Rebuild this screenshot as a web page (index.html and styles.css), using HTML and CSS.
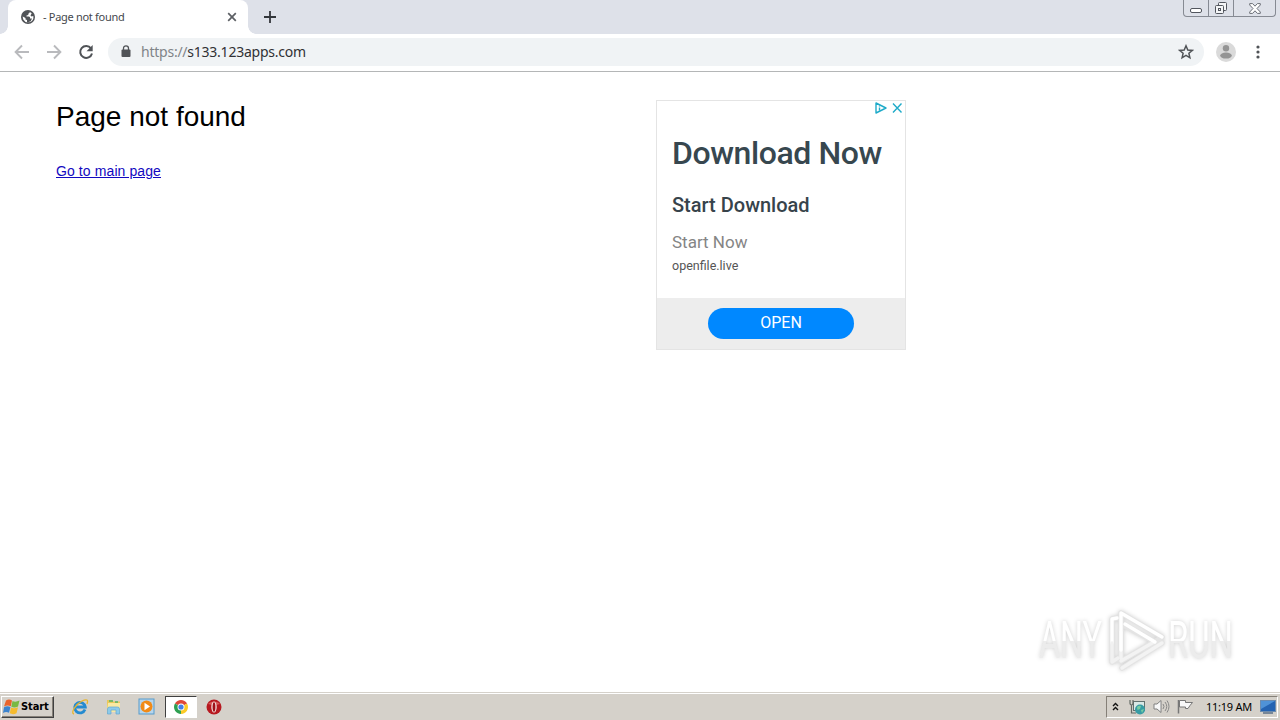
FILE: index.html
```
<!DOCTYPE html>
<html lang="en">
<head>
    <meta charset="UTF-8">
    <title>- Page not found</title>
    <link rel="stylesheet" href="styles.css">
</head>
<body>
    <div class="tab-strip">
        <div class="tab">
            <svg class="tab-icon" width="14" height="14" viewBox="0 0 14 14">
                <circle cx="7" cy="7" r="7" fill="#505357"/>
                <path d="M8.500 1.800Q9.500 3 7.500 3.500L7.200 5 5.500 5.500V6.500H8Q9.500 7 9 8.500H11Q10.500 11.500 7.500 12.300L6 12.200V10L4.500 9.500V8L1.700 6.500Q1.800 8 2.300 9.500 4 12.500 7 12.500 11.500 12 12.400 8.200L12.300 6 10.500 6.500 9.500 5.500 10.700 3.200Z" fill="#fff"/>
            </svg>
            <span class="tab-title">- Page not found</span>
            <svg class="tab-close" width="10" height="10" viewBox="0 0 10 10">
                <path d="M1.200 1.200L8.800 8.800M8.800 1.200L1.200 8.800" stroke="#5c5f64" stroke-width="1.700"/>
            </svg>
        </div>
        <svg class="new-tab" width="12" height="12" viewBox="0 0 12 12">
            <path d="M6 0V12M0 6H12" stroke="#33363b" stroke-width="1.800"/>
        </svg>
        <div class="window-buttons">
            <div class="win-btn min">
                <svg width="12" height="5" viewBox="0 0 12 5"><rect x=".5" y=".5" width="11" height="4" rx="1.500" fill="#fff" stroke="#52565e"/></svg>
            </div>
            <div class="win-btn restore">
                <svg width="14" height="14" viewBox="0 0 14 14" fill="#f4f5f7" stroke="#52565e">
                    <rect x="4.500" y=".5" width="8" height="8" rx="1"/>
                    <rect x="1.500" y="3.500" width="8" height="8" rx="1"/>
                    <rect x="4.500" y="6.500" width="2" height="2"/>
                </svg>
            </div>
            <div class="win-btn close">
                <svg width="12" height="11" viewBox="0 0 12 11"><path d="M.7.6H3.600L6 3.200 8.400.6H11.300V2L8 5.500 11.300 9V10.400H8.400L6 7.800 3.600 10.400H.7V9L4 5.500.7 2Z" fill="#fff" stroke="#6b6f77"/></svg>
            </div>
        </div>
    </div>

    <div class="toolbar">
        <svg class="nav-icon" width="16" height="16" viewBox="0 0 16 16"><path d="M15 8H2M8 1.500L1.600 8 8 14.500" fill="none" stroke="#b9babd" stroke-width="1.900"/></svg>
        <svg class="nav-icon" width="16" height="16" viewBox="0 0 16 16"><path d="M1 8H14M8 1.500L14.400 8 8 14.500" fill="none" stroke="#b9babd" stroke-width="1.900"/></svg>
        <svg class="nav-icon" width="16" height="16" viewBox="0 0 16 16">
            <path d="M13 4.300A6 6 0 1 0 14 9.500" fill="none" stroke="#505357" stroke-width="2"/>
            <path d="M14.700 1V7.200H8.500Z" fill="#505357"/>
        </svg>
        <div class="address-bar">
            <svg width="10" height="13" viewBox="0 0 10 13">
                <rect x=".5" y="4.500" width="9" height="7.500" rx="1" fill="#505357"/>
                <path d="M2.500 5V3.300a2.500 2.500 0 0 1 5 0V5" fill="none" stroke="#505357" stroke-width="1.300"/>
            </svg>
            <span class="url"><span class="scheme">https://</span>s133.123apps.com</span>
            <svg class="star" width="16" height="16" viewBox="0 0 16 16"><path d="M8 1.800L9.800 6 14.300 6.400 10.900 9.300 11.900 13.800 8 11.400 4.100 13.800 5.100 9.300 1.700 6.400 6.200 6Z" fill="none" stroke="#505357" stroke-width="1.500"/></svg>
        </div>
        <svg class="avatar" width="20" height="20" viewBox="0 0 20 20">
            <circle cx="10" cy="10" r="10" fill="#dadada"/>
            <circle cx="10" cy="6.300" r="3.200" fill="#949494"/>
            <ellipse cx="10" cy="13.600" rx="5.800" ry="3" fill="#949494"/>
        </svg>
        <svg class="menu" width="4" height="14" viewBox="0 0 4 14" fill="#505357">
            <circle cx="2" cy="2" r="1.600"/><circle cx="2" cy="7" r="1.600"/><circle cx="2" cy="12" r="1.600"/>
        </svg>
    </div>

    <div class="page">
        <div class="content">
            <h1>Page not found</h1>
            <a href="#">Go to main page</a>
        </div>
        <div class="ad">
            <svg class="ad-choices" width="29" height="14" viewBox="0 0 29 14" fill="none" stroke="#1fabc9" stroke-width="1.400">
                <path d="M2 2V12L12 7Z" stroke-linejoin="round"/>
                <path d="M5.500 6.500V9.500M5.500 4.500V5.500"/>
                <path d="M19 2.500L27.500 11.500M27.500 2.500L19 11.500"/>
            </svg>
            <div class="ad-body">
                <div class="ad-title">Download Now</div>
                <div class="ad-subtitle">Start Download</div>
                <div class="ad-text">Start Now</div>
                <div class="ad-domain">openfile.live</div>
            </div>
            <div class="ad-footer">
                <div class="ad-button">OPEN</div>
            </div>
        </div>
    </div>

    <svg class="watermark" width="230" height="76" viewBox="0 0 230 76">
        <defs>
            <linearGradient id="shine" gradientUnits="userSpaceOnUse" x1="0" y1="0" x2="0" y2="68">
                <stop offset=".52" stop-color="#fff"/>
                <stop offset=".52" stop-color="#ececec"/>
            </linearGradient>
        </defs>
        <g class="mark-text" fill="url(#shine)">
            <text x="4" y="52" textLength="63" lengthAdjust="spacingAndGlyphs">ANY</text>
            <text x="133" y="52" textLength="65" lengthAdjust="spacingAndGlyphs">RUN</text>
        </g>
        <g transform="translate(1 1)" fill="none" stroke-linejoin="round" stroke-linecap="round">
            <g stroke="#e4e4e4" stroke-width="5.500">
                <path d="M85 43V6L126 30 119 35 89 19"/>
                <path d="M81 11L76 12V55L85 51V25"/>
                <path d="M86 61L126 36M85 54L118 35"/>
            </g>
            <g stroke="#f3f3f3" stroke-width="3.400">
                <path d="M85 51V25M86 61L126 36M85 54L118 35"/>
            </g>
            <g stroke="#fff" stroke-width="3.400">
                <path d="M85 43V6L126 30M89 17L119 35"/>
                <path d="M81 11L76 12V36"/>
            </g>
            <path d="M76 36V55L82 51" stroke="#f1f1f1" stroke-width="3.400"/>
        </g>
    </svg>

    <div class="taskbar">
        <div class="start">
            <svg width="17" height="16" viewBox="0 0 17 16">
                <path d="M3 1.500Q6-.5 9 1.500L7.800 7.300Q4.500 5.800 1 7.500Z" fill="#e9632b"/>
                <path d="M9.500 2Q12.500 3.500 16.500 1.500L15 7.500Q11.500 9.200 8.300 7.700Z" fill="#79b943"/>
                <path d="M1 8.200Q4.300 6.500 7.500 8L6 13.800Q3 12.300 0 14Z" fill="#3b83ce"/>
                <path d="M8 8.500Q11 10 15 8.300L13.500 14.200Q10 16 6.800 14.300Z" fill="#f5bb2e"/>
            </svg>
            <span>Start</span>
        </div>
        <div class="quick-launch">
            <div class="task">
                <svg width="18" height="18" viewBox="0 0 18 18">
                    <path d="M14 11.500A5.300 5.300 0 1 1 14.300 9H5" fill="none" stroke="#258bd0" stroke-width="2.800"/>
                    <path d="M3 16C-1 15 5 6 11 3 16 .5 17.500 2 16 6" fill="none" stroke="#e9b52c" stroke-width="1.300"/>
                </svg>
            </div>
            <div class="task">
                <svg width="17" height="17" viewBox="0 0 17 17">
                    <path d="M2 2H7L8 3.500H15V14H2Z" fill="#e9c85b"/>
                    <path d="M3 5H15V14H2Z" fill="#f9e9a2"/>
                    <path d="M4 3H8M10 4H13" stroke="#54b36a" stroke-width="1.500"/>
                    <path d="M2.500 16V11Q2.500 9 4.500 9H12.500Q14.500 9 14.500 11V16H11V12H6V16Z" fill="#8ccaea" stroke="#62a8d1" stroke-width=".7"/>
                </svg>
            </div>
            <div class="task">
                <svg width="17" height="17" viewBox="0 0 17 17">
                    <rect x="1" y="1" width="15" height="15" fill="#b6d5ec" stroke="#579bcb"/>
                    <circle cx="8.500" cy="8.500" r="6" fill="#f18a16"/>
                    <path d="M6.500 4.800L12 8.500 6.500 12.200Z" fill="#fff"/>
                </svg>
            </div>
            <div class="task active">
                <svg width="14" height="14" viewBox="0 0 14 14">
                    <path d="M7 7L.94 3.500A7 7 0 0 1 13.060 3.500Z" fill="#df4738"/>
                    <path d="M7 7L13.060 3.500A7 7 0 0 1 7 14Z" fill="#fbca27"/>
                    <path d="M7 7L7 14A7 7 0 0 1 .94 3.500Z" fill="#2ea052"/>
                    <circle cx="7" cy="7" r="3.500" fill="#fff"/>
                    <circle cx="7" cy="7" r="2.600" fill="#437fe8"/>
                </svg>
            </div>
            <div class="task">
                <svg width="16" height="16" viewBox="0 0 16 16">
                    <circle cx="8" cy="8" r="7.500" fill="#b71920"/>
                    <path d="M2 5A7 5 0 0 1 14 5Q8 7 2 5Z" fill="#d85858"/>
                    <ellipse cx="8" cy="8" rx="2.700" ry="5.500" fill="#f5e4e1"/>
                    <ellipse cx="8" cy="8" rx="1.400" ry="4.800" fill="#9f1018"/>
                </svg>
            </div>
        </div>
        <div class="tray">
            <svg class="chevrons" width="7" height="9" viewBox="0 0 7 9"><path d="M1 4L3.500 1.500 6 4M1 8L3.500 5.500 6 8" fill="none" stroke="#111" stroke-width="1.400"/></svg>
            <svg class="network" width="17" height="16" viewBox="0 0 17 16">
                <rect x="4.500" y="2.500" width="11" height="9" fill="#d8e8e5" stroke="#62716f"/>
                <path d="M1 1V4Q1 6 2.500 6V14H7M4 1V4Q4 6 2.500 6" fill="none" stroke="#646b65" stroke-width="1.200"/>
                <circle cx="11" cy="10.500" r="5" fill="#379ca4"/>
                <path d="M8 8Q10 6 12 7L11 10 8.500 11ZM12 11L15 10 13 14Z" fill="#79cda1"/>
            </svg>
            <svg class="volume" width="17" height="15" viewBox="0 0 17 15">
                <path d="M1 5H4L8 1.500V13.500L4 10H1Z" fill="#f8f8f8" stroke="#808080"/>
                <path d="M10 5Q12 7.500 10 10M12 3Q15.500 7.500 12 12M14 1.500Q18 7.500 14 13.500" fill="none" stroke="#888"/>
            </svg>
            <svg class="flag" width="17" height="15" viewBox="0 0 17 15">
                <path d="M1.500 1V14.500" stroke="#777" stroke-width="1.500"/>
                <path d="M2.500 1.500H8.500V3.500H15.500L13 6.500 11 9.500H8.500V8H2.500Z" fill="#f8f8f8" stroke="#777"/>
            </svg>
            <span class="clock">11:19 AM</span>
            <svg class="desktop" width="16" height="14" viewBox="0 0 16 14">
                <rect x=".5" y=".5" width="15" height="11" fill="#2463b2" stroke="#6c8bae"/>
                <path d="M1 1H15L1 9Z" fill="#4f92d7"/>
                <path d="M3 13H13" stroke="#596e87" stroke-width="1.500"/>
            </svg>
        </div>
    </div>
</body>
</html>
```
FILE: styles.css
```
* {
    box-sizing: border-box;
}
body {
    margin: 0;
    height: 720px;
    overflow: hidden;
    display: flex;
    flex-direction: column;
    background: #fff;
    font-family: "Liberation Sans", Arial, sans-serif;
}
svg {
    display: block;
    flex: none;
}

/* browser */
.tab-strip {
    height: 34px;
    flex: none;
    display: flex;
    align-items: flex-start;
    padding-left: 8px;
    background: #dee1e9;
}
.tab {
    position: relative;
    width: 240px;
    height: 34px;
    display: flex;
    align-items: center;
    padding: 0 11px 0 13px;
    border-radius: 8px 8px 0 0;
    background: #fff;
}
.tab::before,
.tab::after {
    content: "";
    position: absolute;
    bottom: 0;
    width: 8px;
    height: 8px;
}
.tab::before {
    left: -8px;
    background: radial-gradient(circle at 0 0, transparent 7.5px, #fff 8px);
}
.tab::after {
    right: -8px;
    background: radial-gradient(circle at 100% 0, transparent 7.5px, #fff 8px);
}
.tab-title {
    margin-left: 8px;
    font: 11px/14px "Noto Sans", sans-serif;
    letter-spacing: -0.3px;
    color: #45484c;
    white-space: nowrap;
}
.tab-close {
    margin-left: auto;
}
.new-tab {
    margin: 11px 0 0 16px;
}
.window-buttons {
    display: flex;
    width: 93px;
    height: 17px;
    margin: 0 4px 0 auto;
    border: 1px solid #868a93;
    border-top: 0;
    border-radius: 0 0 4px 4px;
}
.win-btn {
    display: flex;
    justify-content: center;
    border-right: 1px solid #868a93;
}
.win-btn.min {
    width: 25px;
    padding-top: 8px;
}
.win-btn.restore {
    width: 25px;
    padding-top: 2px;
}
.win-btn.close {
    flex: 1;
    padding-top: 3px;
    border-right: 0;
}
.toolbar {
    height: 38px;
    flex: none;
    display: flex;
    align-items: center;
    padding: 0 20px 2px 14px;
    border-bottom: 1px solid #b4b6b7;
}
.nav-icon {
    margin-right: 16px;
}
.address-bar {
    flex: 1;
    height: 28px;
    margin-left: -2px;
    display: flex;
    align-items: center;
    padding: 0 10px 0 13px;
    border-radius: 14px;
    background: #f0f3f5;
}
.url {
    margin-left: 10px;
    font: 14px/20px "Noto Sans", sans-serif;
    letter-spacing: -0.24px;
    color: #303134;
}
.scheme {
    color: #808488;
}
.star {
    margin-left: auto;
}
.avatar {
    margin-left: 12px;
}
.menu {
    margin-left: 20px;
}

/* page */
.page {
    flex: 1;
    display: flex;
    padding: 28px 0 0 56px;
}
.content {
    width: 600px;
}
h1 {
    margin: 0 0 30px;
    font-size: 28px;
    line-height: 33px;
    font-weight: normal;
    color: #000;
}
.content a {
    display: block;
    font-size: 14px;
    line-height: 16px;
    letter-spacing: 0.1px;
    color: #1208c0;
}
.ad {
    position: relative;
    width: 250px;
    height: 250px;
    display: flex;
    flex-direction: column;
    border: 1px solid #e4e4e4;
    font-family: Roboto, sans-serif;
}
.ad-choices {
    position: absolute;
    top: 0;
    right: 2px;
}
.ad-body {
    flex: 1;
    padding: 32px 15px 0;
    white-space: nowrap;
}
.ad-title {
    font-size: 32px;
    line-height: 40px;
    font-weight: 500;
    letter-spacing: -0.42px;
    color: #37474f;
}
.ad-subtitle {
    margin-top: 20px;
    font-size: 20px;
    line-height: 24px;
    font-weight: 500;
    color: #37434b;
}
.ad-text {
    margin-top: 15px;
    font-size: 17px;
    line-height: 20px;
    color: #858585;
}
.ad-domain {
    margin-top: 5px;
    font-size: 12.5px;
    line-height: 18px;
    color: #555;
}
.ad-footer {
    height: 51px;
    display: flex;
    justify-content: center;
    align-items: center;
    background: #ededed;
}
.ad-button {
    width: 146px;
    height: 31px;
    border-radius: 16px;
    background: #0088ff;
    color: #fff;
    font-size: 16px;
    line-height: 30px;
    text-align: center;
}

.watermark {
    position: absolute;
    left: 1035px;
    top: 606px;
    overflow: visible;
    filter: drop-shadow(0 0 2px #cfcfcf);
}
.mark-text {
    font: 51px Roboto, sans-serif;
}

/* taskbar */
.taskbar {
    height: 28px;
    flex: none;
    display: flex;
    align-items: center;
    padding: 2px 2px 2px 1px;
    border-top: 1px solid #d5d1ca;
    box-shadow: inset 0 1px #fff;
    background: #d5d1ca;
}
.start {
    width: 53px;
    height: 22px;
    display: flex;
    align-items: center;
    padding-left: 1px;
    border: 1px solid;
    border-color: #fff #404040 #404040 #fff;
    box-shadow: inset -1px -1px #858078;
}
.start span {
    margin-left: 1px;
    font: bold 11px/16px "DejaVu Sans Condensed", "DejaVu Sans", sans-serif;
    letter-spacing: -0.1px;
    color: #000;
}
.quick-launch {
    display: flex;
    margin-left: 9px;
}
.task {
    width: 33.5px;
    height: 22px;
    display: flex;
    align-items: center;
    justify-content: center;
}
.task.active {
    width: 32px;
    margin-left: 1px;
    border: 1px solid;
    border-color: #404040 #fff #fff #404040;
    background: #fff;
}
.task.active + .task {
    margin-left: 1px;
}
.tray {
    width: 172px;
    height: 22px;
    margin-left: auto;
    display: flex;
    align-items: center;
    padding: 0 1px 0 5px;
    border: 1px solid;
    border-color: #858078 #fff #fff #858078;
}
.network {
    margin-left: 10px;
}
.volume {
    margin-left: 7px;
}
.flag {
    margin-left: 7px;
}
.clock {
    margin-left: auto;
    margin-right: 8px;
    font: 11px/14px "Noto Sans", sans-serif;
    letter-spacing: -0.25px;
    color: #000;
    white-space: nowrap;
}
```
